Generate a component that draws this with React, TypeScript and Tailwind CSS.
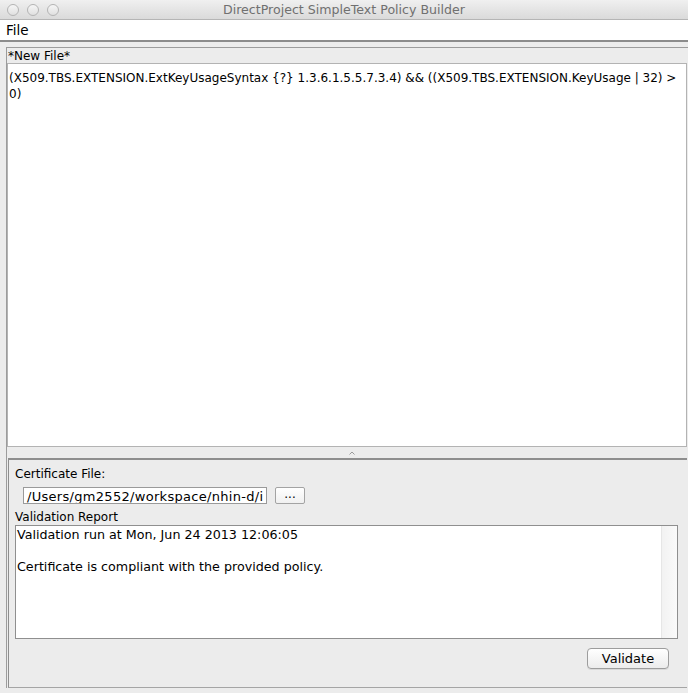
import React from "react";

const font = { fontFamily: '"DejaVu Sans", "Lucida Grande", sans-serif' };

function Light() {
  return (
    <div className="w-[12px] h-[12px] rounded-full border border-[#b4b4b4] bg-gradient-to-b from-[#f6f6f6] to-[#e0e0e0]" />
  );
}

export default function App() {
  return (
    <div
      className="w-[688px] h-[693px] flex flex-col bg-[#ececec] text-[12px] text-black overflow-hidden"
      style={font}
    >
      {/* Title bar */}
      <div className="h-[20px] grid grid-cols-[1fr_auto_1fr] items-center bg-gradient-to-b from-[#f0f0f0] to-[#dadada] border-b border-[#b5b5b5]">
        <div className="flex gap-[8px] pl-[7px]">
          <Light />
          <Light />
          <Light />
        </div>
        <div className="text-[12.6px] text-[#707070] leading-[20px]">
          DirectProject SimpleText Policy Builder
        </div>
        <div />
      </div>

      {/* Menu bar */}
      <div className="h-[20px] bg-white flex items-center pl-[6px] text-[13.5px] leading-[20px] border-b-2 border-[#8c8c8c] box-content">
        File
      </div>

      {/* Content */}
      <div className="flex-1 flex flex-col pl-[6px] pt-[5px] pb-[5px]">
        <div className="flex-1 flex flex-col border-t border-l border-[#9c9c9c]">
          <div className="h-[15px] leading-[16px] pl-[1px] text-[12px]">*New File*</div>
          <div className="h-[384px] mr-[1px] bg-white border border-[#b3b3b3] px-[1px] pt-[6px] leading-[16px] text-[12px] whitespace-pre">
            <div>(X509.TBS.EXTENSION.ExtKeyUsageSyntax {"{?}"} 1.3.6.1.5.5.7.3.4) &amp;&amp; ((X509.TBS.EXTENSION.KeyUsage | 32) &gt;</div>
            <div>0)</div>
          </div>
          {/* Divider */}
          <div className="h-[11px] flex items-center justify-center">
            <svg width="6" height="4" viewBox="0 0 6 4" className="ml-[8px]">
              <path d="M0.5 3.5 L3 1 L5.5 3.5" stroke="#9a9a9a" strokeWidth="1" fill="none" />
            </svg>
          </div>
          {/* Lower panel */}
          <div className="flex-1 ml-[1px] mr-[1px] border-t-2 border-l border-b border-[#8e8e8e] border-b-[#a5a5a5] flex flex-col pl-[6px] pt-[6px]">
            <div className="leading-[16px] text-[12px]">Certificate File:</div>
            <div className="flex items-center gap-[8px] mt-[5px] ml-[8px]">
              <div className="w-[244px] h-[17px] bg-white border border-[#9a9a9a] overflow-hidden text-[13px] leading-[17px] pl-[3px] tracking-[0.3px] whitespace-nowrap">
                /Users/gm2552/workspace/nhin-d/i
              </div>
              <div className="w-[30px] h-[17px] bg-gradient-to-b from-white to-[#f0f0f0] border border-[#a3a3a3] rounded-[2px] flex items-center justify-center text-[12px] leading-none pb-[3px]">
                ...
              </div>
            </div>
            <div className="leading-[16px] mt-[5px] text-[12px]">Validation Report</div>
            <div className="w-[663px] h-[114px] bg-white border border-[#8f8f8f] flex">
              <div className="flex-1 pl-[1px] pt-[1px] leading-[16px] text-[12.7px]">
                <div>Validation run at Mon, Jun 24 2013 12:06:05</div>
                <div>&nbsp;</div>
                <div>Certificate is compliant with the provided policy.</div>
              </div>
              <div className="w-[16px] bg-gradient-to-r from-[#f2f2f2] to-[#fafafa] border-l border-[#e6e6e6]" />
            </div>
            <div className="flex justify-end mt-[9px] pr-[18px]">
              <div className="w-[82px] h-[21px] rounded-[4px] border border-[#9d9d9d] bg-gradient-to-b from-white to-[#ececec] flex items-center justify-center text-[13px] leading-none shadow-[0_1px_0_rgba(0,0,0,0.08)]">
                Validate
              </div>
            </div>
          </div>
        </div>
      </div>
    </div>
  );
}
